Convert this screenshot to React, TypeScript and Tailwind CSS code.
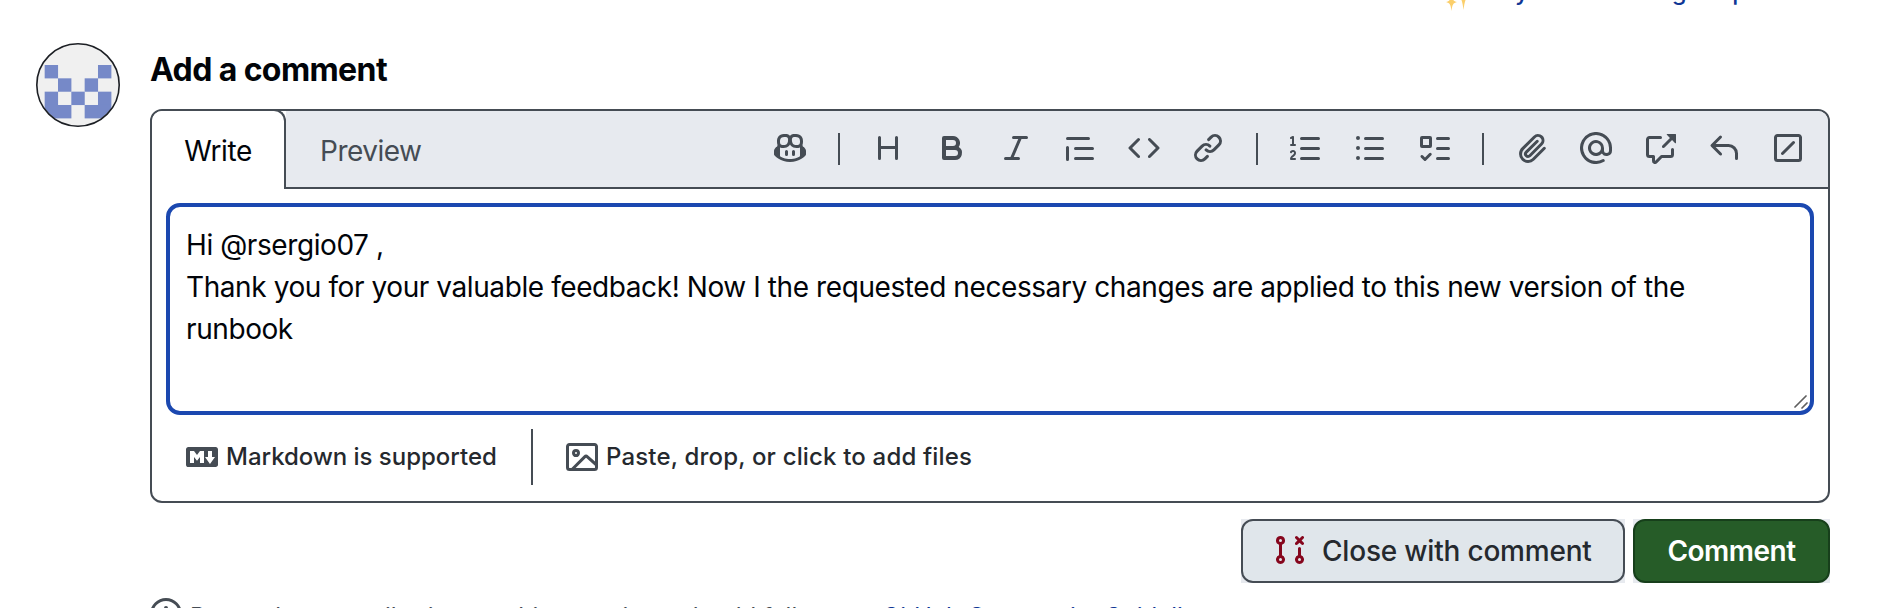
import React from "react";

const ICONS = {
  copilot:
    "M7.998 15.035c-4.562 0-7.873-2.914-7.998-3.749V9.338c.085-.628.677-1.686 1.588-2.065.013-.07.024-.143.036-.218.029-.183.06-.384.126-.612-.201-.508-.254-1.084-.254-1.656 0-.87.128-1.769.693-2.484.579-.733 1.494-1.124 2.724-1.261 1.206-.134 2.262.034 2.944.765.05.053.096.108.139.165.044-.057.094-.112.143-.165.682-.731 1.738-.899 2.944-.765 1.23.137 2.145.528 2.724 1.261.566.715.693 1.614.693 2.484 0 .572-.053 1.148-.254 1.656.066.228.098.429.126.612.012.076.024.148.037.218.924.385 1.522 1.471 1.591 2.095v1.872c0 .766-3.351 3.795-8.002 3.795Zm0-1.485c2.28 0 4.584-1.11 5.002-1.433V7.862l-.023-.116c-.49.21-1.075.291-1.727.291-1.146 0-2.059-.327-2.71-.991A3.222 3.222 0 0 1 8 6.303a3.24 3.24 0 0 1-.544.743c-.65.664-1.563.991-2.71.991-.652 0-1.236-.081-1.727-.291l-.023.116v4.255c.419.323 2.722 1.433 5.002 1.433ZM6.762 2.83c-.193-.206-.637-.413-1.682-.297-1.019.113-1.479.404-1.713.7-.247.312-.369.789-.369 1.554 0 .793.129 1.171.308 1.371.162.181.519.379 1.442.379.853 0 1.339-.235 1.638-.54.315-.322.527-.827.617-1.553.117-.935-.037-1.395-.241-1.614Zm4.155-.297c-1.044-.116-1.488.091-1.681.297-.204.219-.359.679-.242 1.614.091.726.303 1.231.618 1.553.299.305.784.54 1.638.54.922 0 1.28-.198 1.442-.379.179-.2.308-.578.308-1.371 0-.765-.123-1.242-.37-1.554-.233-.296-.693-.587-1.713-.7ZM6.25 9.037a.75.75 0 0 1 .75.75v1.501a.75.75 0 0 1-1.5 0V9.787a.75.75 0 0 1 .75-.75Zm4.25.75v1.501a.75.75 0 0 1-1.5 0V9.787a.75.75 0 0 1 1.5 0Z",
  heading:
    "M3.75 2a.75.75 0 0 1 .75.75V7h7V2.75a.75.75 0 0 1 1.5 0v10.5a.75.75 0 0 1-1.5 0V8.5h-7v4.75a.75.75 0 0 1-1.5 0V2.75A.75.75 0 0 1 3.75 2Z",
  bold: "M4 2h4.5a3.501 3.501 0 0 1 2.852 5.53A3.499 3.499 0 0 1 9.5 14H4a1 1 0 0 1-1-1V3a1 1 0 0 1 1-1Zm1 7v3h4.5a1.5 1.5 0 0 0 0-3Zm3.5-2a1.5 1.5 0 0 0 0-3H5v3Z",
  italic:
    "M6 2.75A.75.75 0 0 1 6.75 2h6.5a.75.75 0 0 1 0 1.5h-2.505l-3.858 9H9.25a.75.75 0 0 1 0 1.5h-6.5a.75.75 0 0 1 0-1.5h2.505l3.858-9H6.75A.75.75 0 0 1 6 2.75Z",
  quote:
    "M1.75 2.5h10.5a.75.75 0 0 1 0 1.5H1.75a.75.75 0 0 1 0-1.5Zm4 5h8.5a.75.75 0 0 1 0 1.5h-8.5a.75.75 0 0 1 0-1.5Zm0 5h8.5a.75.75 0 0 1 0 1.5h-8.5a.75.75 0 0 1 0-1.5ZM2.5 7.75v6a.75.75 0 0 1-1.5 0v-6a.75.75 0 0 1 1.5 0Z",
  code: "m11.28 3.22 4.25 4.25a.75.75 0 0 1 0 1.06l-4.25 4.25a.749.749 0 0 1-1.275-.326.749.749 0 0 1 .215-.734L13.94 8l-3.72-3.72a.749.749 0 0 1 .326-1.275.749.749 0 0 1 .734.215Zm-6.56 0a.751.751 0 0 1 1.042.018.751.751 0 0 1 .018 1.042L2.06 8l3.72 3.72a.749.749 0 0 1-.326 1.275.749.749 0 0 1-.734-.215L.47 8.53a.75.75 0 0 1 0-1.06Z",
  link: "m7.775 3.275 1.25-1.25a3.5 3.5 0 1 1 4.95 4.95l-2.5 2.5a3.5 3.5 0 0 1-4.95 0 .751.751 0 0 1 .018-1.042.751.751 0 0 1 1.042-.018 1.998 1.998 0 0 0 2.83 0l2.5-2.5a2.002 2.002 0 0 0-2.83-2.83l-1.25 1.25a.751.751 0 0 1-1.042-.018.751.751 0 0 1-.018-1.042Zm-4.69 9.64a1.998 1.998 0 0 0 2.83 0l1.25-1.25a.751.751 0 0 1 1.042.018.751.751 0 0 1 .018 1.042l-1.25 1.25a3.5 3.5 0 1 1-4.95-4.95l2.5-2.5a3.5 3.5 0 0 1 4.95 0 .751.751 0 0 1-.018 1.042.751.751 0 0 1-1.042.018 1.998 1.998 0 0 0-2.83 0l-2.5 2.5a1.998 1.998 0 0 0 0 2.83Z",
  listOrdered:
    "M5 3.25a.75.75 0 0 1 .75-.75h8.5a.75.75 0 0 1 0 1.5h-8.5A.75.75 0 0 1 5 3.25Zm0 5a.75.75 0 0 1 .75-.75h8.5a.75.75 0 0 1 0 1.5h-8.5A.75.75 0 0 1 5 8.25Zm0 5a.75.75 0 0 1 .75-.75h8.5a.75.75 0 0 1 0 1.5h-8.5a.75.75 0 0 1-.75-.75ZM.924 10.32a.5.5 0 0 1-.851-.525l.001-.001.001-.002.002-.004.007-.011c.097-.144.215-.273.348-.384.228-.19.588-.392 1.068-.392.468 0 .858.181 1.126.484.259.294.377.673.377 1.038 0 .987-.686 1.495-1.156 1.845l-.047.035c-.303.225-.522.4-.654.597h1.357a.5.5 0 0 1 0 1H.5a.5.5 0 0 1-.5-.5c0-1.005.692-1.52 1.167-1.875l.035-.025c.531-.396.8-.625.8-1.078a.57.57 0 0 0-.128-.376C1.806 10.068 1.695 10 1.5 10a.658.658 0 0 0-.429.163.835.835 0 0 0-.144.153ZM2.003 2.5V6h.503a.5.5 0 0 1 0 1H.5a.5.5 0 0 1 0-1h.503V3.308l-.28.14a.5.5 0 0 1-.446-.895l1.003-.5a.5.5 0 0 1 .723.447Z",
  listUnordered:
    "M5.75 2.5h8.5a.75.75 0 0 1 0 1.5h-8.5a.75.75 0 0 1 0-1.5Zm0 5h8.5a.75.75 0 0 1 0 1.5h-8.5a.75.75 0 0 1 0-1.5Zm0 5h8.5a.75.75 0 0 1 0 1.5h-8.5a.75.75 0 0 1 0-1.5ZM2 14a1 1 0 1 1 0-2 1 1 0 0 1 0 2Zm1-6a1 1 0 1 1-2 0 1 1 0 0 1 2 0ZM2 4a1 1 0 1 1 0-2 1 1 0 0 1 0 2Z",
  tasklist:
    "M2 2h4a1 1 0 0 1 1 1v4a1 1 0 0 1-1 1H2a1 1 0 0 1-1-1V3a1 1 0 0 1 1-1Zm4.655 8.595a.75.75 0 0 1 0 1.06L4.03 14.28a.75.75 0 0 1-1.06 0l-1.5-1.5a.749.749 0 0 1 .326-1.275.749.749 0 0 1 .734.215l.97.97 2.095-2.095a.75.75 0 0 1 1.06 0ZM9.75 2.5h5.5a.75.75 0 0 1 0 1.5h-5.5a.75.75 0 0 1 0-1.5Zm0 5h5.5a.75.75 0 0 1 0 1.5h-5.5a.75.75 0 0 1 0-1.5Zm0 5h5.5a.75.75 0 0 1 0 1.5h-5.5a.75.75 0 0 1 0-1.5Zm-7.25-9v3h3v-3Z",
  paperclip:
    "M12.212 3.02a1.753 1.753 0 0 0-2.478.003l-5.83 5.83a3.007 3.007 0 0 0-.88 2.127c0 .795.315 1.551.88 2.116.567.567 1.333.89 2.126.89.79 0 1.548-.321 2.116-.89l5.48-5.48a.75.75 0 0 1 1.061 1.06l-5.48 5.48a4.492 4.492 0 0 1-3.177 1.33c-1.2 0-2.345-.487-3.187-1.33a4.483 4.483 0 0 1-1.32-3.177c0-1.195.475-2.341 1.32-3.186l5.83-5.83a3.25 3.25 0 0 1 5.553 2.297c0 .863-.343 1.691-.953 2.301L7.439 12.39c-.375.377-.884.59-1.416.593a1.998 1.998 0 0 1-1.412-.593 1.992 1.992 0 0 1 0-2.828l5.48-5.48a.751.751 0 0 1 1.042.018.751.751 0 0 1 .018 1.042l-5.48 5.48a.492.492 0 0 0 0 .707.499.499 0 0 0 .352.154.51.51 0 0 0 .356-.154l5.833-5.827a1.755 1.755 0 0 0 0-2.481Z",
  mention:
    "M4.75 2.37a6.501 6.501 0 0 0 6.5 11.26.75.75 0 0 1 .75 1.298A7.999 7.999 0 0 1 .989 4.148 8 8 0 0 1 16 7.75v1.5a2.75 2.75 0 0 1-5.072 1.475 3.999 3.999 0 0 1-6.65-4.19A4 4 0 0 1 12 8v1.25a1.25 1.25 0 0 0 2.5 0V7.867a6.5 6.5 0 0 0-9.75-5.496ZM10.5 8a2.5 2.5 0 1 0-5 0 2.5 2.5 0 0 0 5 0Z",
  crossReference:
    "M2.75 3.5a.25.25 0 0 0-.25.25v7.5c0 .138.112.25.25.25h2a.75.75 0 0 1 .75.75v2.19l2.72-2.72a.749.749 0 0 1 .53-.22h4.5a.25.25 0 0 0 .25-.25v-2.5a.75.75 0 0 1 1.5 0v2.5A1.75 1.75 0 0 1 13.25 13H9.06l-2.573 2.573A1.458 1.458 0 0 1 4 14.543V13H2.75A1.75 1.75 0 0 1 1 11.25v-7.5C1 2.784 1.784 2 2.75 2h5.5a.75.75 0 0 1 0 1.5ZM16 1.25v4.146a.25.25 0 0 1-.427.177L14.03 4.03l-3.75 3.75a.749.749 0 0 1-1.275-.326.749.749 0 0 1 .215-.734l3.75-3.75-1.543-1.543A.25.25 0 0 1 11.604 1h4.146a.25.25 0 0 1 .25.25Z",
  reply:
    "M6.78 1.97a.75.75 0 0 1 0 1.06L3.81 6h6.44A4.75 4.75 0 0 1 15 10.75v2.5a.75.75 0 0 1-1.5 0v-2.5a3.25 3.25 0 0 0-3.25-3.25H3.81l2.97 2.97a.749.749 0 0 1-.326 1.275.749.749 0 0 1-.734-.215L1.47 7.28a.75.75 0 0 1 0-1.06l4.25-4.25a.75.75 0 0 1 1.06 0Z",
  slash:
    "M13.25 1c.966 0 1.75.784 1.75 1.75v10.5A1.75 1.75 0 0 1 13.25 15H2.75A1.75 1.75 0 0 1 1 13.25V2.75C1 1.784 1.784 1 2.75 1ZM2.75 2.5a.25.25 0 0 0-.25.25v10.5c0 .138.112.25.25.25h10.5a.25.25 0 0 0 .25-.25V2.75a.25.25 0 0 0-.25-.25Zm8.53 2.22a.75.75 0 0 1 0 1.06l-5.5 5.5a.75.75 0 0 1-1.06-1.06l5.5-5.5a.75.75 0 0 1 1.06 0Z",
  markdown:
    "M14.85 3c.63 0 1.15.52 1.14 1.15v7.7c0 .63-.51 1.15-1.15 1.15H1.15C.52 13 0 12.48 0 11.84V4.15C0 3.52.52 3 1.15 3ZM9 11V5H7L5.5 7 4 5H2v6h2V8l1.5 1.92L7 8v3Zm2.99.5L14.5 8H13V5h-2v3H9.5Z",
  image:
    "M16 13.25A1.75 1.75 0 0 1 14.25 15H1.75A1.75 1.75 0 0 1 0 13.25V2.75C0 1.784.784 1 1.75 1h12.5c.966 0 1.75.784 1.75 1.75ZM1.75 2.5a.25.25 0 0 0-.25.25v10.5c0 .138.112.25.25.25h.94l.03-.03 6.077-6.078a1.75 1.75 0 0 1 2.412-.06L14.5 10.31V2.75a.25.25 0 0 0-.25-.25Zm12.5 11a.25.25 0 0 0 .25-.25v-.917l-4.298-3.889a.25.25 0 0 0-.344.009L4.81 13.5ZM7 6a2 2 0 1 1-3.999.001A2 2 0 0 1 7 6ZM5.5 6a.5.5 0 1 0-1 0 .5.5 0 0 0 1 0Z",
  pullRequestClosed:
    "M3.25 1A2.25 2.25 0 0 1 4 5.372v5.256a2.251 2.251 0 1 1-1.5 0V5.372A2.251 2.251 0 0 1 3.25 1Zm9.5 5.5a.75.75 0 0 1 .75.75v3.378a2.251 2.251 0 1 1-1.5 0V7.25a.75.75 0 0 1 .75-.75Zm-2.03-5.273a.75.75 0 0 1 1.06 0l.97.97.97-.97a.748.748 0 0 1 1.265.332.75.75 0 0 1-.205.729l-.97.97.97.97a.751.751 0 0 1-.018 1.042.751.751 0 0 1-1.042.018l-.97-.97-.97.97a.749.749 0 0 1-1.275-.326.749.749 0 0 1 .215-.734l.97-.97-.97-.97a.75.75 0 0 1 0-1.06ZM2.5 3.25a.75.75 0 1 0 1.5 0 .75.75 0 0 0-1.5 0ZM3.25 12a.75.75 0 1 0 0 1.5.75.75 0 0 0 0-1.5Zm9.5 0a.75.75 0 1 0 0 1.5.75.75 0 0 0 0-1.5Z",
  info: "M0 8a8 8 0 1 1 16 0A8 8 0 0 1 0 8Zm8-6.5a6.5 6.5 0 1 0 0 13 6.5 6.5 0 0 0 0-13ZM6.5 7.75A.75.75 0 0 1 7.25 7h1a.75.75 0 0 1 .75.75v2.75h.25a.75.75 0 0 1 0 1.5h-2a.75.75 0 0 1 0-1.5h.25v-2h-.25a.75.75 0 0 1-.75-.75ZM8 6a1 1 0 1 1 0-2 1 1 0 0 1 0 2Z",
};

type IconName = keyof typeof ICONS;

function Icon({ name, className = "" }: { name: IconName; className?: string }) {
  return (
    <svg viewBox="0 0 16 16" fill="currentColor" aria-hidden="true" className={`size-8 shrink-0 ${className}`}>
      <path d={ICONS[name]} />
    </svg>
  );
}

const TOOLBAR: IconName[][] = [
  ["copilot"],
  ["heading", "bold", "italic", "quote", "code", "link"],
  ["listOrdered", "listUnordered", "tasklist"],
  ["paperclip", "mention", "crossReference", "reply", "slash"],
];

function Toolbar() {
  return (
    <div className="flex h-[74px] items-center gap-8 pr-6 text-[#454c54]">
      {TOOLBAR.map((group, i) => (
        <React.Fragment key={i}>
          {i > 0 && <span className="mt-0.5 h-8 w-0.5 bg-[#454c54]" />}
          {group.map((name) => (
            <button key={name} aria-label={name}>
              <Icon name={name} />
            </button>
          ))}
        </React.Fragment>
      ))}
    </div>
  );
}

const AVATAR_CELLS = [
  [0, 1], [4, 1],
  [1, 2], [3, 2],
  [0, 3], [2, 3], [4, 3],
  [0, 4], [1, 4], [3, 4], [4, 4],
];

function Avatar() {
  return (
    <svg viewBox="0 0 84 84" className="size-[84px] shrink-0">
      <defs>
        <clipPath id="avatar">
          <circle cx="42" cy="42" r="40.5" />
        </clipPath>
      </defs>
      <circle cx="42" cy="42" r="41" fill="#f0f0f0" />
      <g clipPath="url(#avatar)" fill="#7689c8">
        {AVATAR_CELLS.map(([c, r]) => (
          <rect key={`${c}-${r}`} x={8.67 + c * 13.33} y={8.67 + r * 13.33} width="13.4" height="13.4" />
        ))}
      </g>
      <circle cx="42" cy="42" r="41.2" fill="none" stroke="#1c1f24" strokeWidth="1.6" />
    </svg>
  );
}

function Sparkles() {
  return (
    <svg viewBox="0 0 32 38" className="h-[38px] w-8 shrink-0" fill="#fbcf6b">
      <path d="M17.500 2c1 10 3 13 12 15-8.500 2-10.500 6-12 18-1.500-12-3.500-16-12-18 9-2 11-5 12-15Z" />
      <path d="M5.500 18.500c.8 6 1.600 7.500 5.500 8.500-3.900 1-4.700 2.500-5.500 9-.8-6.500-1.600-8-5.500-9 3.900-1 4.700-2.500 5.500-8.500Z" />
    </svg>
  );
}

export default function App() {
  return (
    <div className="h-[608px] w-[1898px] overflow-hidden bg-white pl-9 font-['Inter','Liberation_Sans',sans-serif] text-[#25292e]">
      <div className="-mt-[25px] flex h-[68px] w-[1794px] items-start justify-end text-2xl text-[#0f3795]">
        <Sparkles />
        <a className="w-[352px] text-right leading-[33px] font-medium tracking-[-0.4px] whitespace-nowrap">Try the new merge experience</a>
      </div>
      <div className="flex w-[1794px] items-start gap-[30px]">
        <Avatar />
        <main className="flex min-w-0 flex-1 flex-col">
          <h2 className="mt-1.5 h-[60px] text-[32px] leading-[42px] font-bold tracking-[-0.6px] text-[#010409]">Add a comment</h2>

          <section className="flex h-[394px] flex-col overflow-hidden rounded-xl border-2 border-[#454c54]">
            <header className="flex h-[78px] shrink-0">
              <button className="-mt-0.5 w-[134px] shrink-0 rounded-tr-xl border-t-2 border-r-2 border-[#454c54] bg-white pt-0.5 text-[28px] tracking-[-0.4px] text-[#010409]">
                Write
              </button>
              <div className="flex flex-1 justify-between border-b-2 border-[#454c54] bg-[#e7eaef]">
                <button className="pt-1 pl-[34px] text-[28px] tracking-[-0.5px] text-[#454c54]">Preview</button>
                <Toolbar />
              </div>
            </header>

            <div className="relative mx-3.5 mt-[14px] h-[212px] shrink-0 rounded-[14px] border-4 border-[#1b48b0] px-4 pt-[17px] text-[28px] leading-[42px] tracking-[-0.415px] whitespace-pre text-[#010409]">
              <p>Hi @rsergio07 ,</p>
              <p>Thank you for your valuable feedback! Now I the requested necessary changes are applied to this new version of the</p>
              <p>runbook</p>
              <svg viewBox="0 0 14 14" className="absolute right-0.5 bottom-0.5 size-3.5" stroke="#5f5f5f" strokeWidth="1.7" strokeLinecap="round">
                <path d="M1 12 12 1M8 13l5-5" />
              </svg>
            </div>

            <footer className="mt-3.5 flex h-14 items-center pl-[34px] text-2xl font-medium">
              <Icon name="markdown" className="mr-2 text-[#454c54]" />
              <span className="w-[271px] tracking-[-0.02px] whitespace-nowrap">Markdown is supported</span>
              <span className="mr-[33px] ml-[34px] h-14 w-0.5 bg-[#454c54]" />
              <Icon name="image" className="mr-2 text-[#454c54]" />
              <span className="tracking-[0.17px]">Paste, drop, or click to add files</span>
            </footer>
          </section>

          <div className="mt-4 flex justify-end gap-2 text-[28px]">
            <div className="bg-[#e7eaef]">
              <button className="flex h-16 w-96 items-center rounded-xl border-2 border-[#454c54] bg-[#e0e6eb] pl-[31px] font-medium">
                <Icon name="pullRequestClosed" className="mr-4 -mt-0.5 text-[#86061d]" />
                <span className="tracking-[-0.2px]">Close with comment</span>
              </button>
            </div>
            <div className="bg-[#e7eaef]">
              <button className="h-16 w-[197px] rounded-xl border-2 border-[#173f1b] bg-[#265c28] font-semibold tracking-[-0.5px] text-white">
                Comment
              </button>
            </div>
          </div>

          <p className="mt-[15px] flex h-8 items-center gap-2 text-2xl whitespace-nowrap text-[#454c54]">
            <Icon name="info" />
            <span className="mt-1.5 tracking-[0.03px]">
              Remember, contributions to this repository should follow our <a className="text-[#0f3795]">GitHub Community Guidelines</a>.
            </span>
          </p>
        </main>
      </div>
    </div>
  );
}
